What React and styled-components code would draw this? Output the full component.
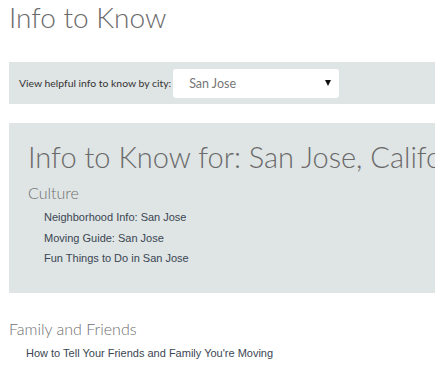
import React from "react";
import styled, { createGlobalStyle } from "styled-components";

const Global = createGlobalStyle`
  html, body { margin: 0; padding: 0; background: #fff; }
  body { overflow: hidden; }
`;

const Page = styled.div`
  padding: 0 0 0 9px;
  width: 480px;
  font-family: Lato, "Open Sans", sans-serif;
`;

const Title = styled.h1`
  margin: 0;
  font-family: Lato, sans-serif;
  font-weight: 300;
  font-size: 28px;
  line-height: 34px;
  color: #6a6a6a;
`;

const FilterBar = styled.div`
  margin-top: 28px;
  height: 42px;
  background: #dfe4e4;
  display: flex;
  align-items: center;
  padding-left: 10px;
`;

const Label = styled.label`
  font-family: Lato, sans-serif;
  font-size: 10.4px;
  color: #333;
  margin-right: 2px;
`;

const SelectWrap = styled.div`
  position: relative;
  width: 166px;
  height: 29px;
`;

const Select = styled.select`
  appearance: none;
  -webkit-appearance: none;
  width: 100%;
  height: 100%;
  border: none;
  border-radius: 3px;
  background: #fff;
  padding: 0 0 0 16px;
  font-family: Lato, sans-serif;
  font-size: 12.5px;
  color: #777;
  outline: none;
`;

const Arrow = styled.span`
  position: absolute;
  right: 8px;
  top: 11px;
  width: 0;
  height: 0;
  border-left: 3.5px solid transparent;
  border-right: 3.5px solid transparent;
  border-top: 6px solid #111;
  pointer-events: none;
`;

const Box = styled.section`
  margin-top: 19px;
  height: 170px;
  box-sizing: border-box;
  background: #dfe4e4;
  padding: 16px 0 0 19px;
  white-space: nowrap;
  overflow: hidden;
`;

const BoxTitle = styled.h2`
  margin: 0;
  font-family: Lato, sans-serif;
  font-weight: 300;
  font-size: 29px;
  line-height: 36px;
  color: #6a6a6a;
`;

const Section = styled.div`
  margin-top: ${(p) => p.$top || 0}px;
`;

const SectionTitle = styled.h3`
  margin: 0;
  font-family: Lato, sans-serif;
  font-weight: 300;
  font-size: ${(p) => p.$size || 16}px;
  line-height: 20px;
  color: #707070;
`;

const LinkList = styled.ul`
  list-style: none;
  margin: 0;
  padding: ${(p) => p.$pad || "4px 0 0 16px"};
`;

const LinkItem = styled.li`
  font-family: "Liberation Sans", Arial, sans-serif;
  font-size: 11px;
  line-height: 20.5px;
  color: #3a4653;
`;

export default function App() {
  return (
    <>
      <Global />
      <Page>
        <Title>Info to Know</Title>
        <FilterBar>
          <Label>View helpful info to know by city:</Label>
          <SelectWrap>
            <Select defaultValue="San Jose">
              <option>San Jose</option>
            </Select>
            <Arrow />
          </SelectWrap>
        </FilterBar>
        <Box>
          <BoxTitle>Info to Know for: San Jose, California</BoxTitle>
          <Section $top={8}>
            <SectionTitle $size={16}>Culture</SectionTitle>
            <LinkList>
              <LinkItem>Neighborhood Info: San Jose</LinkItem>
              <LinkItem>Moving Guide: San Jose</LinkItem>
              <LinkItem>Fun Things to Do in San Jose</LinkItem>
            </LinkList>
          </Section>
        </Box>
        <Section $top={26}>
          <SectionTitle $size={16}>Family and Friends</SectionTitle>
          <LinkList $pad="4px 0 0 17px">
            <LinkItem>How to Tell Your Friends and Family You're Moving</LinkItem>
          </LinkList>
        </Section>
      </Page>
    </>
  );
}
